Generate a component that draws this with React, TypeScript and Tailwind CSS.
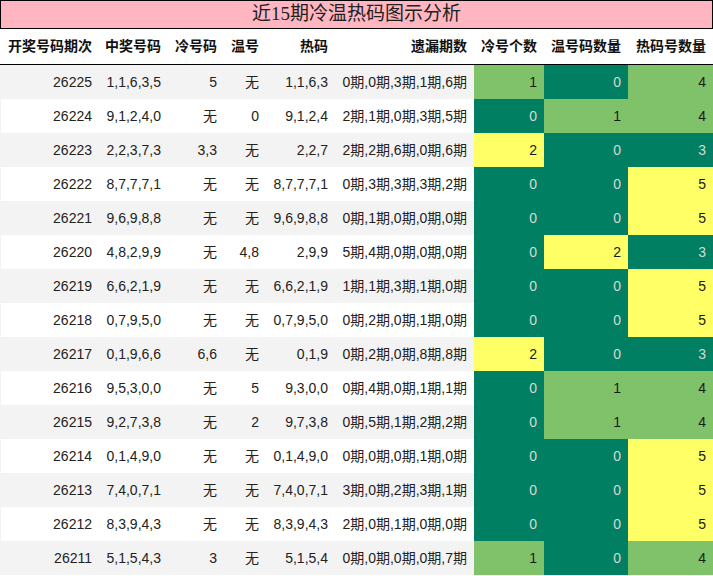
const SANS = "font-['Liberation_Sans','Noto_Sans_CJK_SC',sans-serif]";

type Row = [string, string, string, string, string, string, number, number, number];

const rows: Row[] = [
  ["26225", "1,1,6,3,5", "5", "无", "1,1,6,3", "0期,0期,3期,1期,6期", 1, 0, 4],
  ["26224", "9,1,2,4,0", "无", "0", "9,1,2,4", "2期,1期,0期,3期,5期", 0, 1, 4],
  ["26223", "2,2,3,7,3", "3,3", "无", "2,2,7", "2期,2期,6期,0期,6期", 2, 0, 3],
  ["26222", "8,7,7,7,1", "无", "无", "8,7,7,7,1", "0期,3期,3期,3期,2期", 0, 0, 5],
  ["26221", "9,6,9,8,8", "无", "无", "9,6,9,8,8", "0期,1期,0期,0期,0期", 0, 0, 5],
  ["26220", "4,8,2,9,9", "无", "4,8", "2,9,9", "5期,4期,0期,0期,0期", 0, 2, 3],
  ["26219", "6,6,2,1,9", "无", "无", "6,6,2,1,9", "1期,1期,3期,1期,0期", 0, 0, 5],
  ["26218", "0,7,9,5,0", "无", "无", "0,7,9,5,0", "0期,2期,0期,1期,0期", 0, 0, 5],
  ["26217", "0,1,9,6,6", "6,6", "无", "0,1,9", "0期,2期,0期,8期,8期", 2, 0, 3],
  ["26216", "9,5,3,0,0", "无", "5", "9,3,0,0", "0期,4期,0期,1期,1期", 0, 1, 4],
  ["26215", "9,2,7,3,8", "无", "2", "9,7,3,8", "0期,5期,1期,2期,2期", 0, 1, 4],
  ["26214", "0,1,4,9,0", "无", "无", "0,1,4,9,0", "0期,0期,0期,1期,0期", 0, 0, 5],
  ["26213", "7,4,0,7,1", "无", "无", "7,4,0,7,1", "3期,0期,2期,3期,1期", 0, 0, 5],
  ["26212", "8,3,9,4,3", "无", "无", "8,3,9,4,3", "2期,0期,1期,0期,0期", 0, 0, 5],
  ["26211", "5,1,5,4,3", "3", "无", "5,1,5,4", "0期,0期,0期,0期,7期", 1, 0, 4],
];

const headers = ["开奖号码期次", "中奖号码", "冷号码", "温号", "热码", "遗漏期数", "冷号个数", "温号码数量", "热码号数量"];

const GRID = "grid grid-cols-[98px_69px_56px_42px_69px_139px_70px_84px_85px]";

// level 0 = teal, 1 = green, 2 = yellow
function levelClass(level: number) {
  if (level === 0) return "bg-[#017f62] text-[#cfdcd7]";
  if (level === 1) return "bg-[#80c269] text-[#1a1a1a]";
  return "bg-[#ffff66] text-[#1a1a1a]";
}

function Cell({ children, className = "" }: { children: React.ReactNode; className?: string }) {
  return <div className={`flex items-center justify-end pr-[7px] whitespace-nowrap ${className}`}>{children}</div>;
}

export default function App() {
  return (
    <div className={`w-[713px] bg-white text-[14px] text-[#222] ${SANS}`}>
      <div className="h-[29px] border border-black bg-[#ffb6c1] flex items-center justify-center text-[19px] text-[#222] font-['Liberation_Serif','Noto_Sans_CJK_SC',serif]">
        近15期冷温热码图示分析
      </div>
      <div className="border-b border-black pl-px">
        <div className={`${GRID} h-[35px] font-bold text-[#111]`}>
          {headers.map((h) => (
            <Cell key={h}>{h}</Cell>
          ))}
        </div>
      </div>
      <div className="border-l border-[#f3f3f3]">
        {rows.map((r, i) => (
          <div key={r[0]} className={`${GRID} h-[34px] ${i % 2 === 0 ? "bg-[#f3f3f3]" : "bg-white"}`}>
            <Cell>{r[0]}</Cell>
            <Cell>{r[1]}</Cell>
            <Cell>{r[2]}</Cell>
            <Cell>{r[3]}</Cell>
            <Cell>{r[4]}</Cell>
            <Cell>{r[5]}</Cell>
            <Cell className={levelClass(r[6])}>{r[6]}</Cell>
            <Cell className={levelClass(r[7])}>{r[7]}</Cell>
            <Cell className={levelClass(r[8] - 3)}>{r[8]}</Cell>
          </div>
        ))}
      </div>
    </div>
  );
}
